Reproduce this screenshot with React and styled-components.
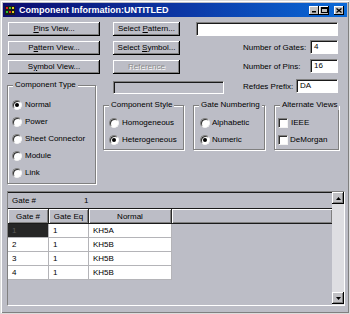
import React from 'react';
import styled, { createGlobalStyle, css } from 'styled-components';

const FONT = '"Liberation Sans", Arial, Helvetica, sans-serif';
const BG = '#bcbdc6';

const Global = createGlobalStyle`
  html, body { margin: 0; padding: 0; }
  body { background: ${BG}; font-family: ${FONT}; }
`;

const Window = styled.div`
  width: 350px;
  height: 314px;
  box-sizing: border-box;
  background: ${BG};
  border: 1px solid #dcdcdc;
  box-shadow: inset 1px 1px 0 #ffffff, inset -1px -1px 0 #808080;
  padding: 2px;
  display: flex;
  flex-direction: column;
  font-family: ${FONT};
  font-size: 8px;
  color: #000;
  overflow: hidden;
`;

const TitleBar = styled.div`
  height: 14px;
  flex: none;
  display: flex;
  align-items: center;
  padding: 0 3px 0 2px;
  background: linear-gradient(to right, #0c0c6e 0%, #0c3aa8 55%, #0a6ad8 100%);
`;

const TitleText = styled.span`
  margin-left: 4px;
  color: #fff;
  font-weight: bold;
  font-size: 9px;
  line-height: 14px;
  white-space: nowrap;
`;

const Controls = styled.div`
  margin-left: auto;
  display: flex;
`;

const CtrlBtn = styled.div`
  width: 10px;
  height: 9px;
  box-sizing: border-box;
  background: #c0c0c0;
  box-shadow: inset -1px -1px 0 #000, inset 1px 1px 0 #fff;
  display: flex;
  align-items: center;
  justify-content: center;
  margin-left: ${p => p.$gap || 0}px;
`;

const Body = styled.div`
  flex: 1;
  min-height: 0;
  display: flex;
  flex-direction: column;
  padding: 5px 3px 0 4px;
`;

const Top = styled.div`
  display: flex;
  height: 161px;
  flex: none;
`;

const LeftCol = styled.div`
  width: 96px;
  flex: none;
  display: flex;
  flex-direction: column;
`;

const ButtonStack = styled.div`
  display: flex;
  flex-direction: column;
  gap: 5px;
  width: ${p => p.$w}px;
  margin-left: ${p => p.$ml || 0}px;
`;

const Button = styled.button`
  all: unset;
  height: 14px;
  box-sizing: border-box;
  width: 100%;
  display: flex;
  align-items: center;
  justify-content: center;
  background: ${BG};
  box-shadow: inset -1px -1px 0 #000, inset 1px 1px 0 #fff, inset -2px -2px 0 #808080;
  font-family: ${FONT};
  font-size: 8px;
  line-height: 10px;
  white-space: pre;
  color: ${p => (p.$disabled ? '#8c8c8c' : '#000')};
  ${p => p.$disabled && css`text-shadow: 1px 1px 0 #fff;`}
`;

const RightCol = styled.div`
  display: flex;
  flex-direction: column;
`;

const TopRow = styled.div`
  display: flex;
`;

const FieldCol = styled.div`
  margin-left: 16px;
  width: 142px;
  display: flex;
  flex-direction: column;
`;

const Input = styled.div`
  box-sizing: border-box;
  width: ${p => (p.$w ? `${p.$w}px` : '100%')};
  height: ${p => p.$h || 14}px;
  flex: none;
  background: ${p => (p.$disabled ? BG : '#fff')};
  border: 1px solid;
  border-color: #808080 #ffffff #ffffff #808080;
  box-shadow: inset 1px 1px 0 #1a1a1a;
  padding: 0 0 0 3px;
  font-size: 8px;
  line-height: 12px;
  margin-top: ${p => p.$mt || 0}px;
  margin-left: ${p => p.$ml || 0}px;
`;

const FieldRow = styled.div`
  display: flex;
  align-items: center;
  margin-top: ${p => p.$mt || 0}px;
  margin-left: ${p => p.$ml || 0}px;
`;

const FieldLabel = styled.span`
  width: ${p => p.$w}px;
  margin-left: ${p => p.$ml || 0}px;
  flex: none;
  white-space: nowrap;
  font-size: 8px;
`;

const Row2 = styled.div`
  display: flex;
  align-items: flex-start;
  margin-top: 5px;
`;

const GroupsRow = styled.div`
  display: flex;
  gap: 9px;
  margin-top: 11px;
`;

const Group = styled.div`
  box-sizing: border-box;
  width: ${p => p.$w}px;
  height: ${p => p.$h}px;
  flex: none;
  border: 1px solid #808080;
  box-shadow: inset 1px 1px 0 #fff, 1px 1px 0 #fff;
  display: flex;
  flex-direction: column;
  align-items: flex-start;
  margin-top: ${p => p.$mt || 0}px;
`;

const Legend = styled.span`
  margin: -6px 0 0 5px;
  padding: 0 2px;
  height: 10px;
  line-height: 10px;
  background: ${BG};
  white-space: nowrap;
  font-size: 8px;
`;

const Items = styled.div`
  display: flex;
  flex-direction: column;
  padding: ${p => p.$pt}px 0 0 ${p => p.$pl}px;
`;

const OptionRow = styled.div`
  height: 17px;
  display: flex;
  align-items: center;
  gap: ${p => p.$gap || 3}px;
  white-space: nowrap;
`;

const RadioCircle = styled.span`
  width: 10px;
  height: 10px;
  box-sizing: border-box;
  border-radius: 50%;
  background: #fff;
  border: 1px solid;
  border-color: #808080 #f4f4f4 #f4f4f4 #808080;
  box-shadow: inset 1px 1px 0 #303030;
  display: flex;
  align-items: center;
  justify-content: center;
  flex: none;
`;

const Dot = styled.span`
  width: 4px;
  height: 4px;
  border-radius: 50%;
  background: #000;
`;

const CheckBox = styled.span`
  width: 10px;
  height: 10px;
  box-sizing: border-box;
  background: #fff;
  border: 1px solid;
  border-color: #808080 #f4f4f4 #f4f4f4 #808080;
  box-shadow: inset 1px 1px 0 #303030;
  flex: none;
`;

const Panel = styled.div`
  margin-top: 8px;
  width: 338px;
  height: 115px;
  box-sizing: border-box;
  flex: none;
  border: 1px solid;
  border-color: #808080 #ffffff #ffffff #808080;
  display: flex;
`;

const GridArea = styled.div`
  flex: 1;
  display: flex;
  flex-direction: column;
`;

const CaptionRow = styled.div`
  height: 15px;
  flex: none;
  border-top: 1px solid #1a1a1a;
  border-bottom: 1px solid #1a1a1a;
  display: flex;
  align-items: center;
  font-size: 8px;
`;

const CaptionCell = styled.span`
  width: ${p => p.$w}px;
  padding-left: ${p => p.$pl || 0}px;
  flex: none;
`;

const HeaderRow = styled.div`
  height: 15px;
  flex: none;
  display: flex;
  border-bottom: 1px solid #1a1a1a;
  box-sizing: border-box;
`;

const HeaderCell = styled.div`
  box-sizing: border-box;
  width: ${p => (p.$w ? `${p.$w}px` : 'auto')};
  flex: ${p => (p.$w ? 'none' : '1')};
  border-right: ${p => (p.$w ? '1px solid #2a2a2a' : 'none')};
  box-shadow: inset 1px 1px 0 #fff, inset -1px -1px 0 #808080;
  display: flex;
  align-items: center;
  justify-content: center;
  font-size: 8px;
`;

const DataRow = styled.div`
  display: flex;
  height: 14px;
  flex: none;
`;

const DataCell = styled.div`
  box-sizing: border-box;
  width: ${p => p.$w}px;
  flex: none;
  background: ${p => (p.$selected ? '#262626' : '#fff')};
  color: ${p => (p.$selected ? '#5a5a5a' : '#000')};
  border-right: 1px solid #b4b4b8;
  border-bottom: 1px solid #b4b4b8;
  padding-left: 4px;
  display: flex;
  align-items: center;
  font-size: 8px;
`;

const ScrollBar = styled.div`
  width: 12px;
  flex: none;
  display: flex;
  flex-direction: column;
  background: #dedee2;
`;

const ScrollBtn = styled.div`
  width: 12px;
  height: 12px;
  box-sizing: border-box;
  background: #c0c0c4;
  box-shadow: inset -1px -1px 0 #000, inset 1px 1px 0 #fff, inset -2px -2px 0 #808080;
  display: flex;
  align-items: center;
  justify-content: center;
  flex: none;
  margin-top: ${p => (p.$bottom ? 'auto' : '0')};
  margin-bottom: ${p => (p.$bottom ? '1px' : '0')};
`;

const TitleIcon = () => (
  <svg width="10" height="9" viewBox="0 0 10 9">
    <rect width="10" height="9" fill="#1a1a1a" />
    <rect x="1" y="1" width="2" height="2" fill="#e02020" />
    <rect x="4" y="1" width="2" height="2" fill="#30c030" />
    <rect x="7" y="1" width="2" height="2" fill="#e0d020" />
    <rect x="1" y="5" width="2" height="2" fill="#30c030" />
    <rect x="4" y="5" width="2" height="2" fill="#e02020" />
    <rect x="7" y="5" width="2" height="2" fill="#e0d020" />
  </svg>
);

const Arrow = ({ down }) => (
  <svg width="5" height="3" viewBox="0 0 5 3">
    <polygon points={down ? '0,0 5,0 2.5,3' : '0,3 5,3 2.5,0'} fill="#000" />
  </svg>
);

const Radio = ({ checked, label, gap }) => (
  <OptionRow $gap={gap}>
    <RadioCircle>{checked && <Dot />}</RadioCircle>
    <span>{label}</span>
  </OptionRow>
);

const Check = ({ label, gap }) => (
  <OptionRow $gap={gap}>
    <CheckBox />
    <span>{label}</span>
  </OptionRow>
);

const rows = [
  ['1', '1', 'KH5A'],
  ['2', '1', 'KH5B'],
  ['3', '1', 'KH5B'],
  ['4', '1', 'KH5B'],
];

export default function App() {
  return (
    <>
      <Global />
      <Window>
        <TitleBar>
          <TitleIcon />
          <TitleText>Component Information:UNTITLED</TitleText>
          <Controls>
            <CtrlBtn>
              <svg width="6" height="6" viewBox="0 0 6 6"><rect x="1" y="4" width="4" height="1.5" fill="#000" /></svg>
            </CtrlBtn>
            <CtrlBtn>
              <svg width="7" height="6" viewBox="0 0 7 6"><rect x="0.5" y="0.5" width="6" height="5" fill="none" stroke="#000" /><rect x="0.5" y="0.5" width="6" height="1.5" fill="#000" /></svg>
            </CtrlBtn>
            <CtrlBtn $gap={5}>
              <svg width="6" height="5" viewBox="0 0 6 5"><path d="M0.5 0.5 L5.5 4.5 M5.5 0.5 L0.5 4.5" stroke="#000" strokeWidth="1.3" /></svg>
            </CtrlBtn>
          </Controls>
        </TitleBar>
        <Body>
          <Top>
            <LeftCol>
              <ButtonStack $w={92} $ml={1}>
                <Button><span><u>P</u>ins View...</span></Button>
                <Button><span>P<u>a</u>ttern View...</span></Button>
                <Button><span>S<u>y</u>mbol View...</span></Button>
              </ButtonStack>
              <Group $w={89} $h={99} $mt={11}>
                <Legend>Component Type</Legend>
                <Items $pt={6} $pl={4}>
                  <Radio checked label="Normal" />
                  <Radio label="Power" />
                  <Radio label="Sheet Connector" />
                  <Radio label="Module" />
                  <Radio label="Link" />
                </Items>
              </Group>
            </LeftCol>
            <RightCol>
              <TopRow>
                <ButtonStack $w={67} $ml={10}>
                  <Button><span>Select <u>P</u>attern...</span></Button>
                  <Button><span>Select <u>S</u>ymbol...</span></Button>
                  <Button $disabled><span>Reference</span></Button>
                </ButtonStack>
                <FieldCol>
                  <Input />
                  <FieldRow $mt={4}>
                    <FieldLabel $w={67} $ml={47}>Number of Gates:</FieldLabel>
                    <Input $w={28}>4</Input>
                  </FieldRow>
                  <FieldRow $mt={5}>
                    <FieldLabel $w={67} $ml={47}>Number of Pins:</FieldLabel>
                    <Input $w={28}>16</Input>
                  </FieldRow>
                </FieldCol>
              </TopRow>
              <Row2>
                <Input $w={111} $h={13} $mt={2} $ml={10} $disabled />
                <FieldRow $ml={19}>
                  <FieldLabel $w={53}>Refdes Prefix:</FieldLabel>
                  <Input $w={42}>DA</Input>
                </FieldRow>
              </Row2>
              <GroupsRow>
                <Group $w={81} $h={45}>
                  <Legend>Component Style</Legend>
                  <Items $pt={4} $pl={5}>
                    <Radio label="Homogeneous" />
                    <Radio checked label="Heterogeneous" />
                  </Items>
                </Group>
                <Group $w={72} $h={45}>
                  <Legend>Gate Numbering</Legend>
                  <Items $pt={4} $pl={6}>
                    <Radio label="Alphabetic" gap={2} />
                    <Radio checked label="Numeric" gap={2} />
                  </Items>
                </Group>
                <Group $w={65} $h={45}>
                  <Legend>Alternate Views</Legend>
                  <Items $pt={4} $pl={3}>
                    <Check label="IEEE" gap={3} />
                    <Check label="DeMorgan" gap={2} />
                  </Items>
                </Group>
              </GroupsRow>
            </RightCol>
          </Top>
          <Panel>
            <GridArea>
              <CaptionRow>
                <CaptionCell $w={72} $pl={4}>Gate #</CaptionCell>
                <CaptionCell $w={20}>1</CaptionCell>
              </CaptionRow>
              <HeaderRow>
                <HeaderCell $w={41}>Gate #</HeaderCell>
                <HeaderCell $w={40}>Gate Eq</HeaderCell>
                <HeaderCell $w={83}>Normal</HeaderCell>
                <HeaderCell />
              </HeaderRow>
              {rows.map((r, i) => (
                <DataRow key={i}>
                  <DataCell $w={41} $selected={i === 0}>{r[0]}</DataCell>
                  <DataCell $w={40}>{r[1]}</DataCell>
                  <DataCell $w={83}>{r[2]}</DataCell>
                </DataRow>
              ))}
            </GridArea>
            <ScrollBar>
              <ScrollBtn><Arrow /></ScrollBtn>
              <ScrollBtn $bottom><Arrow down /></ScrollBtn>
            </ScrollBar>
          </Panel>
        </Body>
      </Window>
    </>
  );
}
